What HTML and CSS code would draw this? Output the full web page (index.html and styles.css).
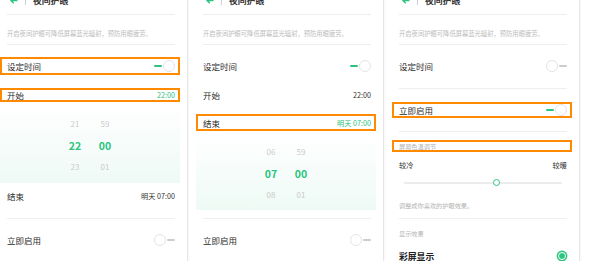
FILE: index.html
```html
<!DOCTYPE html>
<html lang="zh-CN">
<head>
    <meta charset="UTF-8">
    <meta name="viewport" content="width=device-width, initial-scale=1.0">
    <title>夜间护眼</title>
    <link rel="stylesheet" href="styles.css">
</head>
<body>
    <!-- screen 1: start time picker -->
    <div class="panel">
        <div class="header">
            <svg class="back" width="8" height="7" viewBox="0 0 8 7"><path d="M7.5 3.5H1M3.8 0.7L1 3.5l2.8 2.8" fill="none" stroke="#2bc47e" stroke-width="1.4"/></svg>
            <span class="bar"></span>
            <span class="title">夜间护眼</span>
        </div>
        <div class="divider"></div>
        <div class="desc">开启夜间护眼可降低屏幕蓝光辐射，预防用眼疲劳。</div>
        <div class="divider"></div>

        <div class="row r-set hl">
            <span class="label">设定时间</span>
            <span class="toggle on"><i class="track"></i><i class="knob"></i></span>
        </div>
        <div class="row r-start hl">
            <span class="label">开始</span>
            <span class="value green">22:00</span>
        </div>
        <div class="picker p-start">
            <div class="col"><span>21</span><span class="sel">22</span><span>23</span></div>
            <div class="col"><span>59</span><span class="sel">00</span><span>01</span></div>
        </div>
        <div class="row r-end1">
            <span class="label">结束</span>
            <span class="value">明天 07:00</span>
        </div>
        <div class="divider d-low"></div>
        <div class="row r-now">
            <span class="label">立即启用</span>
            <span class="toggle"><i class="knob"></i><i class="track"></i></span>
        </div>
    </div>

    <!-- screen 2: end time picker -->
    <div class="panel">
        <div class="header">
            <svg class="back" width="8" height="7" viewBox="0 0 8 7"><path d="M7.5 3.5H1M3.8 0.7L1 3.5l2.8 2.8" fill="none" stroke="#2bc47e" stroke-width="1.4"/></svg>
            <span class="bar"></span>
            <span class="title">夜间护眼</span>
        </div>
        <div class="divider"></div>
        <div class="desc">开启夜间护眼可降低屏幕蓝光辐射，预防用眼疲劳。</div>
        <div class="divider"></div>

        <div class="row r-set">
            <span class="label">设定时间</span>
            <span class="toggle on"><i class="track"></i><i class="knob"></i></span>
        </div>
        <div class="row r-start">
            <span class="label">开始</span>
            <span class="value">22:00</span>
        </div>
        <div class="row r-end2 hl">
            <span class="label">结束</span>
            <span class="value green">明天 07:00</span>
        </div>
        <div class="picker p-end">
            <div class="col"><span>06</span><span class="sel">07</span><span>08</span></div>
            <div class="col"><span>59</span><span class="sel">00</span><span>01</span></div>
        </div>
        <div class="divider d-low2"></div>
        <div class="row r-now">
            <span class="label">立即启用</span>
            <span class="toggle"><i class="knob"></i><i class="track"></i></span>
        </div>
    </div>

    <!-- screen 3: enable now + colour temperature -->
    <div class="panel">
        <div class="header">
            <svg class="back" width="8" height="7" viewBox="0 0 8 7"><path d="M7.5 3.5H1M3.8 0.7L1 3.5l2.8 2.8" fill="none" stroke="#2bc47e" stroke-width="1.4"/></svg>
            <span class="bar"></span>
            <span class="title">夜间护眼</span>
        </div>
        <div class="divider"></div>
        <div class="desc">开启夜间护眼可降低屏幕蓝光辐射，预防用眼疲劳。</div>
        <div class="divider"></div>

        <div class="row r-set">
            <span class="label">设定时间</span>
            <span class="toggle"><i class="knob"></i><i class="track"></i></span>
        </div>
        <div class="divider d-mid"></div>
        <div class="row r-on hl">
            <span class="label">立即启用</span>
            <span class="toggle on"><i class="track"></i><i class="knob"></i></span>
        </div>
        <div class="divider d-mid"></div>
        <div class="row r-section hl">
            <span class="small">屏幕色温调节</span>
        </div>
        <div class="row r-temp">
            <span class="temp">较冷</span>
            <span class="temp">较暖</span>
        </div>
        <div class="slider">
            <div class="slider-track">
                <span class="slider-knob" style="left: 59%"></span>
            </div>
        </div>
        <div class="row r-hint">
            <span class="small">调整成你喜欢的护眼效果。</span>
        </div>
        <div class="divider d-hint"></div>
        <div class="row r-show">
            <span class="small">显示效果</span>
        </div>
        <div class="row r-color">
            <span class="label strong">彩屏显示</span>
            <span class="radio"></span>
        </div>
    </div>
</body>
</html>
```

FILE: styles.css
```css
body {
    margin: 0;
    width: 593px;
    height: 261px;
    overflow: hidden;
    display: flex;
    gap: 8px;
    background-color: #ffffff;
    font-family: "Noto Sans CJK SC", "Noto Sans", sans-serif;
    color: #2b2b2b;
}

.panel {
    width: 188px;
    flex-shrink: 0;
    box-sizing: border-box;
    padding-right: 7px;
    border-right: 1px solid #e6e6e6;
    box-shadow: 1px 0 2px rgba(0, 0, 0, 0.04);
    display: flex;
    flex-direction: column;
    background-color: #ffffff;
}

.panel > * {
    flex-shrink: 0;
}

.header {
    margin-top: -7px;
    height: 21px;
    box-sizing: border-box;
    padding: 0 0 6px 10px;
    display: flex;
    align-items: center;
}

.header .bar {
    width: 1px;
    height: 9px;
    background-color: #cfcfcf;
    margin: 0 7px 0 7px;
}

.header .title {
    font-size: 8.8px;
    font-weight: 700;
    color: #333;
}

.divider {
    height: 1px;
    background-color: #eeeeee;
    margin: 0 5px 0 7px;
}

.desc {
    padding: 14px 0 5px 7px;
    line-height: 10px;
    font-size: 6.3px;
    color: #bdbdbd;
    white-space: nowrap;
}

.row {
    display: flex;
    justify-content: space-between;
    align-items: center;
    padding: 0 5px 0 7px;
}

.hl {
    box-shadow: inset 0 0 0 2px #ff8a00;
}

.label {
    font-size: 8.5px;
}

.label.strong {
    font-size: 8.8px;
    font-weight: 700;
    color: #222;
}

.value {
    font-size: 7.2px;
    color: #333;
}

.green {
    color: #2bc47e;
}

.small {
    font-size: 6.2px;
    color: #b5b5b5;
}

.temp {
    font-size: 7.2px;
    color: #333;
}

/* row positions */
.r-set { margin-top: 12px; height: 18px; }
.r-start { margin-top: 13px; height: 14px; }
.r-end1 { height: 26px; }
.r-end2 { margin-top: 12px; height: 17px; }
.r-now { height: 42px; }
.r-on { margin-top: 13px; height: 16px; }
.r-section { margin-top: 8px; height: 12px; }
.r-temp { height: 26px; }
.r-hint { margin-top: 7px; height: 20px; }
.r-show { margin-top: 5px; height: 18px; }
.r-color { height: 28px; }

.d-low { margin-top: 9px; }
.d-low2 { margin-top: 8px; }
.d-mid { margin-top: 13px; }
.d-hint { margin-top: 3px; }

/* toggle switch */
.toggle {
    width: 21px;
    height: 12px;
    display: flex;
    align-items: center;
    justify-content: space-between;
}

.toggle .track {
    width: 8px;
    height: 2.5px;
    border-radius: 2px;
    background-color: #cccccc;
}

.toggle.on .track {
    background-color: #2bc47e;
}

.toggle .knob {
    width: 12px;
    height: 12px;
    box-sizing: border-box;
    border-radius: 50%;
    border: 1px solid #e4e4e4;
    background-color: #ffffff;
}

/* time picker */
.picker {
    display: flex;
    justify-content: center;
    gap: 10px;
    background: linear-gradient(#ffffff, #eefaf5);
}

.p-start {
    margin-top: 1px;
    height: 80px;
    padding-top: 10px;
    box-sizing: border-box;
}

.p-end {
    margin-top: 2px;
    height: 77px;
    padding-top: 8px;
    box-sizing: border-box;
}

.picker .col {
    width: 20px;
    display: flex;
    flex-direction: column;
    align-items: center;
}

.picker .col span {
    height: 21.5px;
    line-height: 21.5px;
    font-size: 8px;
    color: #cbcbcb;
}

.picker .col .sel {
    font-size: 10.5px;
    font-weight: 700;
    color: #2bc47e;
}

/* colour temperature slider */
.slider {
    height: 10px;
    padding: 0 10px 0 12px;
    display: flex;
    align-items: center;
}

.slider-track {
    position: relative;
    flex: 1;
    height: 2px;
    border-radius: 1px;
    background-color: #ececec;
}

.slider-knob {
    position: absolute;
    top: 50%;
    width: 5px;
    height: 5px;
    margin: -4px 0 0 -4px;
    border: 1.6px solid #2bc47e;
    border-radius: 50%;
    background-color: #ffffff;
}

.radio {
    width: 6px;
    height: 6px;
    border-radius: 50%;
    background-color: #2bc47e;
    border: 1.5px solid #ffffff;
    box-shadow: 0 0 0 1.4px #2bc47e;
    margin-right: 1px;
}
```
